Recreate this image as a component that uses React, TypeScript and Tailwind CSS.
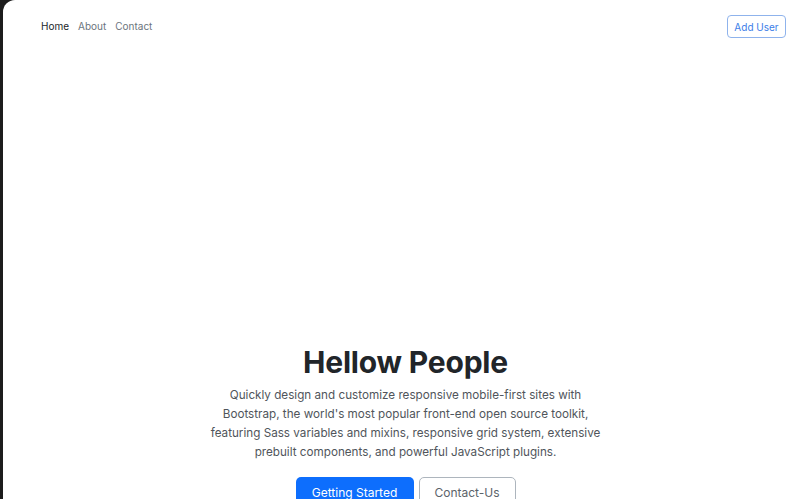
import React from "react";

const navLinks = [
    { label: "Home", active: true },
    { label: "About", active: false },
    { label: "Contact", active: false },
];

function Navbar() {
    return (
        <header className="flex items-center justify-between pl-[35px] pr-[18px] h-[53px]">
            <nav className="flex gap-[3px] text-[10px]">
                {navLinks.map((link) => (
                    <a
                        key={link.label}
                        href="#"
                        className={`px-[3px] ${link.active ? "text-[#212529]" : "text-[#6c757d]"}`}
                    >
                        {link.label}
                    </a>
                ))}
            </nav>
            <button className="h-[23px] w-[59px] rounded-[4px] border border-[#8fb3ec] text-[#3b7de8] text-[10px] leading-none">
                Add User
            </button>
        </header>
    );
}

function Hero() {
    return (
        <section className="flex flex-col items-center text-center pt-[291px] pl-[4px]">
            <h1 className="text-[30px] leading-[36px] font-bold text-[#212529] tracking-[-0.2px]">Hellow People</h1>
            <p className="mt-[6px] w-[394px] text-[11.7px] leading-[19px] text-[#50555b]">
                Quickly design and customize responsive mobile-first sites with Bootstrap, the world's most popular
                front-end open source toolkit, featuring Sass variables and mixins, responsive grid system, extensive
                prebuilt components, and powerful JavaScript plugins.
            </p>
            <div className="flex gap-[5px] mt-[15px]">
                <button className="w-[118px] h-[31px] rounded-[5px] bg-[#0d6efd] text-white text-[12px]">
                    Getting Started
                </button>
                <button className="w-[97px] h-[31px] rounded-[5px] border border-[#adb5bd] text-[#5c636a] text-[12px]">
                    Contact-Us
                </button>
            </div>
        </section>
    );
}

export default function App() {
    return (
        <div className="h-[499px] w-[804px] overflow-hidden bg-[#1c1c1c]" style={{ fontFamily: "Inter, 'Liberation Sans', sans-serif" }}>
            <div className="ml-[3px] h-full bg-white rounded-tl-[12px]">
                <Navbar />
                <Hero />
            </div>
        </div>
    );
}
